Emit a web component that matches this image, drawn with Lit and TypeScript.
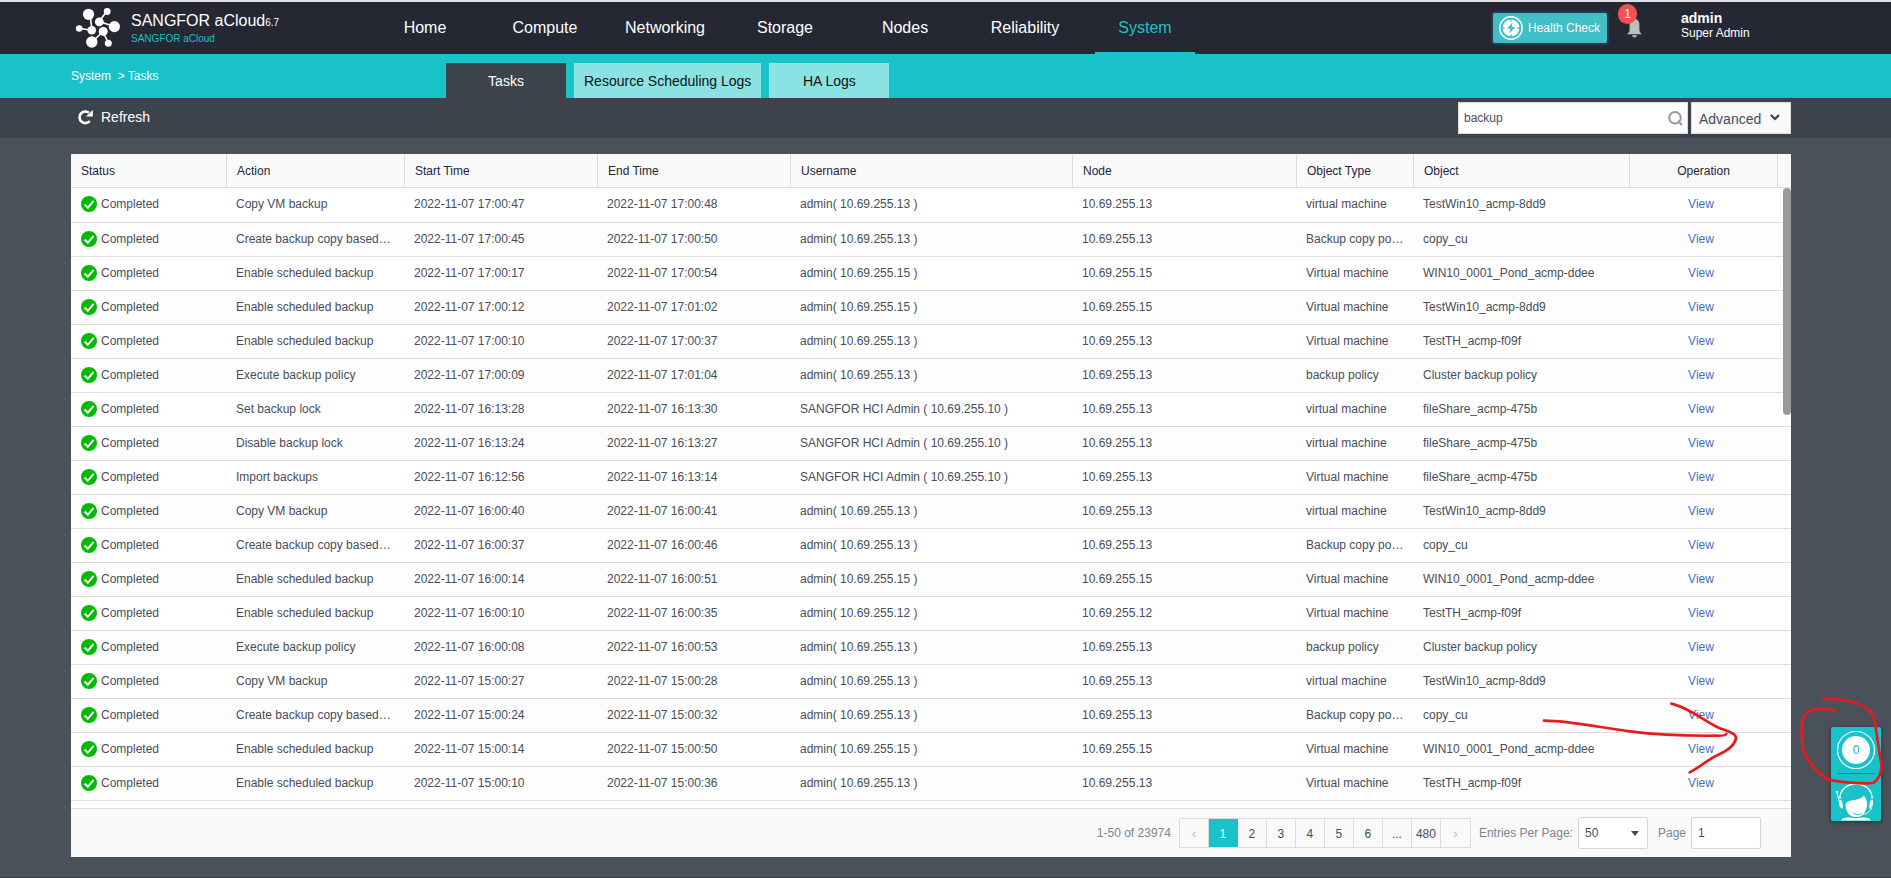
import { LitElement, html, css, svg } from "lit";
import { customElement, state } from "lit/decorators.js";

type Task = {
  action: string;
  start: string;
  end: string;
  user: string;
  node: string;
  type: string;
  object: string;
};

const DAY = "2022-11-07 ";
const t = (action: string, start: string, end: string, user: string, node: number, type: string, object: string): Task => ({
  action,
  start: DAY + start,
  end: DAY + end,
  user,
  node: `10.69.255.${node}`,
  type,
  object,
});
const A13 = "admin( 10.69.255.13 )";
const A15 = "admin( 10.69.255.15 )";
const A12 = "admin( 10.69.255.12 )";
const HCI = "SANGFOR HCI Admin ( 10.69.255.10 )";
const COPY = "Create backup copy based…";
const COPY_TYPE = "Backup copy po…";

const TASKS: Task[] = [
  t("Copy VM backup", "17:00:47", "17:00:48", A13, 13, "virtual machine", "TestWin10_acmp-8dd9"),
  t(COPY, "17:00:45", "17:00:50", A13, 13, COPY_TYPE, "copy_cu"),
  t("Enable scheduled backup", "17:00:17", "17:00:54", A15, 15, "Virtual machine", "WIN10_0001_Pond_acmp-ddee"),
  t("Enable scheduled backup", "17:00:12", "17:01:02", A15, 15, "Virtual machine", "TestWin10_acmp-8dd9"),
  t("Enable scheduled backup", "17:00:10", "17:00:37", A13, 13, "Virtual machine", "TestTH_acmp-f09f"),
  t("Execute backup policy", "17:00:09", "17:01:04", A13, 13, "backup policy", "Cluster backup policy"),
  t("Set backup lock", "16:13:28", "16:13:30", HCI, 13, "virtual machine", "fileShare_acmp-475b"),
  t("Disable backup lock", "16:13:24", "16:13:27", HCI, 13, "virtual machine", "fileShare_acmp-475b"),
  t("Import backups", "16:12:56", "16:13:14", HCI, 13, "Virtual machine", "fileShare_acmp-475b"),
  t("Copy VM backup", "16:00:40", "16:00:41", A13, 13, "virtual machine", "TestWin10_acmp-8dd9"),
  t(COPY, "16:00:37", "16:00:46", A13, 13, COPY_TYPE, "copy_cu"),
  t("Enable scheduled backup", "16:00:14", "16:00:51", A15, 15, "Virtual machine", "WIN10_0001_Pond_acmp-ddee"),
  t("Enable scheduled backup", "16:00:10", "16:00:35", A12, 12, "Virtual machine", "TestTH_acmp-f09f"),
  t("Execute backup policy", "16:00:08", "16:00:53", A13, 13, "backup policy", "Cluster backup policy"),
  t("Copy VM backup", "15:00:27", "15:00:28", A13, 13, "virtual machine", "TestWin10_acmp-8dd9"),
  t(COPY, "15:00:24", "15:00:32", A13, 13, COPY_TYPE, "copy_cu"),
  t("Enable scheduled backup", "15:00:14", "15:00:50", A15, 15, "Virtual machine", "WIN10_0001_Pond_acmp-ddee"),
  t("Enable scheduled backup", "15:00:10", "15:00:36", A13, 13, "Virtual machine", "TestTH_acmp-f09f"),
];

const check = svg`<svg class="check" width="16" height="16" viewBox="0 0 16 16" aria-hidden="true">
  <circle cx="8" cy="8" r="8" fill="#0b0"/>
  <path d="M3.6 8.6 6.8 11.8 12.6 4.8" fill="none" stroke="#fff" stroke-width="2.1"/>
</svg>`;

@customElement("app-header")
export class AppHeader extends LitElement {
  static styles = css`
    :host { display: block; font-family: "Liberation Sans", Arial, sans-serif; color: #fff; }
    .bar { display: flex; align-items: stretch; height: 52px; background: #252833; border-top: 2px solid #dfe1e4; padding: 0 100px 0 75px; }
    .brand { display: flex; width: 300px; }
    .logo { margin-top: 4px; flex: none; }
    .names { padding: 10px 0 0 11px; }
    .name { font-size: 16px; line-height: 18px; }
    .ver { font-size: 10px; }
    .sub { font-size: 10px; line-height: 14px; color: #1ebfc6; }
    .nav { display: flex; gap: 20px; flex: 1; }
    .nav a { box-sizing: border-box; width: 100px; text-align: center; font-size: 16px; line-height: 52px; color: #fff; text-decoration: none; height: 52px; }
    .nav a.on { color: #1ec0c8; border-bottom: 2px solid #19c1c9; }
    .tools { display: flex; align-items: flex-start; }
    .health { display: flex; align-items: center; gap: 5px; width: 114px; height: 30px; padding: 0 0 0 6px; margin: 11px 0 0; border: 0; border-radius: 2px; background: #42bfc6; box-shadow: 0 0 0 2px #213c50; color: #fff; font: 12px "Liberation Sans", Arial, sans-serif; white-space: nowrap; }
    .bell { position: relative; width: 40px; height: 52px; margin-left: 11px; padding: 0; border: 0; background: none; }
    .bell svg { position: absolute; left: 9px; top: 17px; }
    .badge { position: absolute; left: 0; top: 2px; width: 19px; height: 20px; border-radius: 10px; background: #ef5353; color: #fff; font: 12px/20px "Liberation Sans", Arial, sans-serif; text-align: center; }
    .who { width: 110px; margin-left: 23px; padding-top: 8px; font-size: 12px; line-height: 14px; }
    .who b { display: block; font-size: 14px; line-height: 16px; }
  `;
  render() {
    const items = ["Home", "Compute", "Networking", "Storage", "Nodes", "Reliability", "System"];
    return html`<header class="bar">
      <div class="brand">
        <svg class="logo" width="45" height="42" viewBox="75 6 45 42" aria-hidden="true">
          <g stroke="#fff" stroke-width="1.6"><path d="M90 14 92 30M79 28.5 91.500 30M107 11 99 21.500M99 21.500 114.500 26.500M103 31.500 92 42M103 31.500 108.300 43"/></g>
          <g fill="#fff">
            <circle cx="88.5" cy="14.3" r="5.6"/><circle cx="107.2" cy="11.5" r="3.4"/><circle cx="99.3" cy="21.8" r="4.4"/>
            <circle cx="114.4" cy="26.6" r="5.6"/><circle cx="79.2" cy="28.5" r="3.3"/><circle cx="91.8" cy="30.2" r="4.3"/>
            <circle cx="103.2" cy="31.4" r="4.5"/><circle cx="91.8" cy="42" r="5.7"/><circle cx="108.3" cy="43.2" r="3.5"/>
          </g>
        </svg>
        <div class="names">
          <div class="name">SANGFOR aCloud<span class="ver">6.7</span></div>
          <div class="sub">SANGFOR aCloud</div>
        </div>
      </div>
      <nav class="nav">${items.map((n) => html`<a href="#" class=${n === "System" ? "on" : ""}>${n}</a>`)}</nav>
      <div class="tools">
        <button class="health">
          <svg width="24" height="24" viewBox="0 0 24 24" aria-hidden="true">
            <circle cx="12" cy="12" r="11.2" fill="none" stroke="#fff" stroke-width="1.4"/>
            <circle cx="12" cy="12" r="8.400" fill="#fff"/>
            <path d="M12 3v2.600M12 18.400v2.600M3 12h2.600M18.400 12h2.600" stroke="#42bfc6" stroke-width="1.4"/>
            <path d="M13.400 6.500 8 12.800h3.200l-1 5 5.800-6.800h-3.300z" fill="#42bfc6"/>
          </svg>Health Check
        </button>
        <button class="bell" aria-label="Notifications">
          <svg width="15" height="19" viewBox="0 0 15 19" aria-hidden="true"><path fill="#bcbdc1" d="M7.500 0C4.300 0 2.600 2.400 2.600 5.400V11C2.600 13 1.600 13.800 0 15.200H15C13.400 13.800 12.400 13 12.400 11V5.400C12.400 2.400 10.700 0 7.500 0ZM5 16.200H10Q9.600 18.400 7.500 18.400T5 16.200Z"/></svg>
          <span class="badge">1</span>
        </button>
        <div class="who"><b>admin</b>Super Admin</div>
      </div>
    </header>`;
  }
}

@customElement("task-table")
export class TaskTable extends LitElement {
  static styles = css`
    :host { display: flex; flex-direction: column; flex: 1; min-height: 0; background: #fff; font: 12px "Liberation Sans", Arial, sans-serif; color: #484d58; }
    .scroll { position: relative; flex: 1; min-height: 0; overflow: hidden; }
    table { width: 100%; table-layout: fixed; border-collapse: separate; border-spacing: 0; }
    th { box-sizing: border-box; height: 34px; padding: 0 0 0 10px; text-align: left; font-weight: normal; color: #22263a; background: #f9f9f9; border-right: 1px solid #dcdcdc; border-bottom: 1px solid #dcdcdc; }
    th:last-child { border-right: 0; }
    td { box-sizing: border-box; height: 34px; padding: 0 4px 2px 9px; border-bottom: 1px solid #dcdcdc; white-space: nowrap; overflow: hidden; text-overflow: ellipsis; }
    td:first-child { padding-left: 10px; }
    tbody tr:nth-child(even) td { background: #fdfdfd; }
    tbody tr:first-child td { height: 35px; }
    th.mid { text-align: center; padding: 0; }
    td.mid { text-align: center; padding: 0 6px 2px 0; }
    .state { display: flex; align-items: center; gap: 4px; }
    .check { flex: none; }
    a { color: #4270c4; text-decoration: none; }
    .c1 { width: 156px; } .c2 { width: 178px; } .c3 { width: 193px; } .c6 { width: 224px; }
    .c7 { width: 117px; } .c8 { width: 216px; } .c9 { width: 148px; } .c10 { width: 13px; }
    .thumb { position: absolute; right: 0; top: 34px; width: 8px; height: 227px; border-radius: 4px; background: #999; }
    .foot { display: flex; align-items: center; justify-content: flex-end; box-sizing: border-box; height: 49px; padding-right: 30px; border-top: 1px solid #dcdcdc; background: #f9f9f9; color: #80848e; }
    .pager { display: flex; margin: 0 8px; border: 1px solid #dcdcdc; }
    .pager button, .pager span { box-sizing: border-box; width: 29px; height: 28px; padding: 2px 0 0; border: 0; border-right: 1px solid #dcdcdc; background: #f9f9f9; color: #484d58; font: 12px/26px "Liberation Sans", Arial, sans-serif; text-align: center; }
    .pager > :last-child { border-right: 0; }
    .pager .on { background: #19c1c9; color: #fff; border-color: #19c1c9; }
    .pager .arr { color: #b8b8b8; }
    .pick { position: relative; margin: 0 10px 0 5px; }
    .pick::after { content: ""; position: absolute; right: 9px; top: 14px; border: 4px solid transparent; border-top: 5px solid #454a54; border-bottom: 0; }
    select, input { box-sizing: border-box; display: block; width: 70px; height: 32px; padding: 0 6px; border: 1px solid #d6d6d6; border-radius: 2px; background: #fff; color: #484d58; font: 12px "Liberation Sans", Arial, sans-serif; appearance: none; }
    .page { margin-left: 5px; }
  `;
  @state() private page = 1;
  render() {
    const heads = ["Status", "Action", "Start Time", "End Time", "Username", "Node", "Object Type", "Object"];
    return html`
      <div class="scroll">
        <table>
          <colgroup>
            <col class="c1"><col class="c2"><col class="c3"><col class="c3"><col><col class="c6"><col class="c7"><col class="c8"><col class="c9"><col class="c10">
          </colgroup>
          <thead><tr>${heads.map((h) => html`<th>${h}</th>`)}<th class="mid">Operation</th><th></th></tr></thead>
          <tbody>
            ${TASKS.map((r) => html`<tr>
              <td><div class="state">${check}<span>Completed</span></div></td>
              <td>${r.action}</td><td>${r.start}</td><td>${r.end}</td><td>${r.user}</td>
              <td>${r.node}</td><td>${r.type}</td><td>${r.object}</td>
              <td class="mid"><a href="#">View</a></td><td></td>
            </tr>`)}
          </tbody>
        </table>
        <div class="thumb"></div>
      </div>
      <div class="foot">
        <span>1-50 of 23974</span>
        <div class="pager">
          <button class="arr" aria-label="Previous page">‹</button>
          ${[1, 2, 3, 4, 5, 6].map((n) => html`<button class=${n === this.page ? "on" : ""} @click=${() => (this.page = n)}>${n}</button>`)}
          <span>...</span>
          <button>480</button>
          <button class="arr" aria-label="Next page">›</button>
        </div>
        <label for="per">Entries Per Page:</label>
        <div class="pick"><select id="per"><option>50</option><option>100</option></select></div>
        <label for="page">Page</label>
        <input id="page" class="page" type="text" .value=${String(this.page)}>
      </div>`;
  }
}

@customElement("app-root")
export class AppRoot extends LitElement {
  static styles = css`
    :host { display: flex; flex-direction: column; box-sizing: border-box; height: 100vh; min-height: 600px; overflow: hidden; position: relative; background: #4a515b; border-bottom: 1px solid #3a3e48; font: 12px "Liberation Sans", Arial, sans-serif; color: #fff; }
    app-header { flex: none; }
    .strip { display: flex; flex: none; height: 44px; padding-left: 71px; background: #19c1c9; }
    .crumbs { width: 375px; padding-top: 15px; line-height: 14px; white-space: pre; }
    .crumbs a { color: #fff; text-decoration: none; }
    .tabs { display: flex; gap: 8px; align-items: flex-end; }
    .tabs button { height: 35px; min-width: 120px; padding: 0 10px; border: 0; background: #8be2e2; color: #111; font: 14px "Liberation Sans", Arial, sans-serif; }
    .tabs .on { background: #3d434b; color: #fff; }
    .tools { display: flex; flex: none; align-items: center; height: 40px; padding: 0 100px 0 77px; background: #3d434b; }
    .refresh { display: flex; align-items: center; gap: 8px; padding: 0 0 2px; border: 0; background: none; color: #fff; font: 14px "Liberation Sans", Arial, sans-serif; margin-right: auto; }
    .search { position: relative; margin-right: 3px; }
    .search input { display: block; box-sizing: border-box; width: 230px; height: 32px; padding: 0 30px 0 5px; border: 1px solid #dcdcdc; background: #fff; color: #484d58; font: 12px "Liberation Sans", Arial, sans-serif; }
    .search svg { position: absolute; right: 5px; top: 9px; }
    .adv { display: flex; align-items: center; gap: 9px; box-sizing: border-box; width: 100px; height: 32px; padding: 2px 0 0 7px; border: 1px solid #dcdcdc; background: #f9f9f9; color: #484d58; font: 14px "Liberation Sans", Arial, sans-serif; }
    .adv svg { margin-bottom: 4px; }
    .main { display: flex; flex: 1; min-height: 0; padding: 16px 100px 20px 71px; }
    .dock { position: absolute; right: 10px; bottom: 56px; width: 50px; height: 94px; border-radius: 2px; background: #19c1c9; box-shadow: 0 1px 5px rgba(0, 0, 0, 0.4); }
    .dock button { display: block; padding: 0; border: 0; background: none; }
    .dock .count { position: relative; width: 50px; height: 46px; color: #2aa7ae; font: 12px/46px "Liberation Sans", Arial, sans-serif; }
    .count svg { position: absolute; left: 0; top: 0; }
    .count span { position: relative; }
    .rule { height: 1px; margin: 0 6px; background: #12858c; }
    .ink { position: absolute; right: 0; bottom: -1px; pointer-events: none; }
  `;
  render() {
    return html`
      <app-header></app-header>
      <div class="strip">
        <div class="crumbs"><a href="#">System</a>  &gt; <a href="#">Tasks</a></div>
        <div class="tabs">
          <button class="on">Tasks</button><button>Resource Scheduling Logs</button><button>HA Logs</button>
        </div>
      </div>
      <div class="tools">
        <button class="refresh">
          <svg width="16" height="16" viewBox="0 0 16 16" aria-hidden="true"><path d="M12 3.800A5.800 5.800 0 1 0 12.800 12" fill="none" stroke="#fff" stroke-width="2.600"/><path d="M15.800 1v6.600H9z" fill="#fff"/></svg>Refresh
        </button>
        <div class="search">
          <input type="text" aria-label="Search" .value=${"backup"}>
          <svg width="15" height="15" viewBox="0 0 15 15" aria-hidden="true"><circle cx="7" cy="6.800" r="5.800" fill="none" stroke="#999" stroke-width="2"/><path d="M10 10l4 4" stroke="#999" stroke-width="2.200"/></svg>
        </div>
        <button class="adv">Advanced<svg width="10" height="7" viewBox="0 0 10 7" aria-hidden="true"><path d="M1 1l4 4 4-4" fill="none" stroke="#3d434b" stroke-width="2.200"/></svg></button>
      </div>
      <main class="main"><task-table></task-table></main>
      <aside class="dock">
        <button class="count" aria-label="Running tasks">
          <svg width="50" height="46" viewBox="0 0 50 46" aria-hidden="true"><circle cx="25" cy="23" r="18.500" fill="none" stroke="#fff" stroke-width="1.200"/><circle cx="25" cy="23" r="14" fill="#fff"/></svg>
          <span>0</span>
        </button>
        <div class="rule"></div>
        <button aria-label="Support">
          <svg width="50" height="47" viewBox="0 0 50 47" aria-hidden="true">
            <path d="M9.500 25C6 6 17 11.500 25 11.500S44 8 40.500 25" fill="none"/>
            <path d="M9 25C8 5 42 5 41 25" fill="none" stroke="#fff" stroke-width="1.300"/>
            <path d="M8 27 6 18.500" stroke="#fff" stroke-width="1"/>
            <circle cx="6" cy="18" r="1.200" fill="#fff"/>
            <path d="M40.500 34C39 38 35 40.500 30 40.500" fill="none" stroke="#fff" stroke-width="1"/>
            <g fill="#fff">
              <path d="M8 26C10.500 25 11.500 28 12 34.500C9 35 7.500 31 8 26Z"/>
              <path d="M42 26C39.500 25 38.500 28 38 34.500C41 35 42.500 31 42 26Z"/>
              <path d="M14.500 30C18 24 28 28 33 21.500C36 26 37 30 35.500 34C33 42 29 43 25 43S15 41 14.500 30Z"/>
              <path d="M10 46.500C13 42.500 18 43.500 25 44.500C32 43.500 37 42.500 40 46.500Z"/>
            </g>
            <path d="M22 39C25 41 28 41 31 39.500" fill="none" stroke="#19c1c9" stroke-width="1"/>
          </svg>
        </button>
      </aside>
      <svg class="ink" width="371" height="198" viewBox="0 0 1113 594" fill="none" stroke="#e61b1b" stroke-width="8" stroke-linecap="round" stroke-linejoin="round" aria-hidden="true">
        <path d="M72 122C150 122 240 143 330 154C430 167 500 168 590 167Q616 168 619 162"/>
        <path d="M454 71C500 80 560 127 596 143C625 154 648 160 648 174C645 195 620 213 595 224C565 237 540 262 509 277"/>
        <path d="M948 92C890 80 850 90 847 125C842 160 846 190 850 213C870 255 905 295 940 302C980 308 1020 312 1060 309C1080 295 1086 275 1084 250C1076 210 1070 160 1064 120C1055 75 1000 57 907 57"/>
      </svg>`;
  }
}
